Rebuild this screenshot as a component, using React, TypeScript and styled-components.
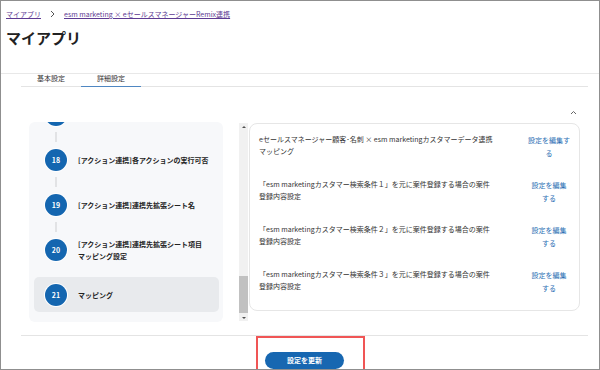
import React from 'react';
import styled, { createGlobalStyle } from 'styled-components';

const GlobalStyle = createGlobalStyle`
  body {
    margin: 0;
    font-family: "Noto Sans CJK JP", "Noto Sans", sans-serif;
    background: #fff;
  }
`;

const Frame = styled.div`
  width: 600px;
  height: 370px;
  box-sizing: border-box;
  border: 1px solid #8f8f8f;
  display: flex;
  flex-direction: column;
  overflow: hidden;
  background: #fff;
`;

const Header = styled.header`
  padding: 7px 5px 25px;
  border-bottom: 1px solid #e8e8e8;
`;

const Breadcrumb = styled.nav`
  display: flex;
  align-items: center;
  gap: 9px;
  font-size: 7px;
  line-height: 12px;
`;

const Crumb = styled.a`
  color: #5d3a92;
  text-decoration: underline;
  cursor: pointer;
`;

const Title = styled.h1`
  margin: 8px 0 0;
  font-size: 15px;
  line-height: 20px;
  font-weight: 700;
  color: #222;
`;

const Main = styled.main`
  margin: 0 11px 0 20px;
  display: flex;
  flex-direction: column;
`;

const TabBar = styled.div`
  display: flex;
  height: 12px;
  border-bottom: 1px solid #e4e4e4;
`;

const Tab = styled.div<{ $active?: boolean }>`
  width: 60px;
  text-align: center;
  font-size: 7px;
  line-height: 9px;
  color: #333;
  margin-bottom: -1px;
  border-bottom: 1px solid ${p => (p.$active ? '#4f87c2' : 'transparent')};
`;

const CollapseRow = styled.div`
  display: flex;
  justify-content: flex-end;
  padding: 23px 11px 0 0;
  height: 12px;
`;

const Body = styled.div`
  display: flex;
  gap: 1px;
  padding: 0 8px;
`;

const LeftColumn = styled.div`
  width: 219px;
  height: 200px;
  display: flex;
  justify-content: space-between;
  flex-shrink: 0;
`;

const StepPanel = styled.div`
  width: 194px;
  height: 200px;
  background: #f7f8fa;
  border-radius: 6px;
  overflow: hidden;
  box-sizing: border-box;
  padding: 0 4px 10px 5px;
  display: flex;
  flex-direction: column;
  justify-content: flex-end;
`;

const StepList = styled.ul`
  list-style: none;
  margin: 0;
  padding: 0;
  display: flex;
  flex-direction: column;
  gap: 10px;
`;

const Step = styled.li<{ $selected?: boolean }>`
  position: relative;
  height: 35px;
  flex-shrink: 0;
  display: flex;
  align-items: center;
  gap: 11px;
  padding-left: 11px;
  border-radius: 5px;
  background: ${p => (p.$selected ? '#e8eaed' : 'transparent')};

  & + &::before {
    content: '';
    position: absolute;
    left: 21px;
    top: -10px;
    width: 2px;
    height: 10px;
    background: #e2e3e5;
  }
`;

const StepNumber = styled.span`
  width: 22px;
  height: 22px;
  flex-shrink: 0;
  border-radius: 50%;
  background: #1466b0;
  box-shadow: 0 0 0 1px #fff;
  color: #fff;
  font-size: 7px;
  font-weight: 700;
  display: flex;
  align-items: center;
  justify-content: center;
`;

const StepLabel = styled.span`
  font-size: 7px;
  line-height: 12px;
  font-weight: 700;
  color: #222;
`;

const ScrollTrack = styled.div`
  width: 9px;
  margin-top: 1px;
  height: 198px;
  background: #f1f1f1;
  display: flex;
  flex-direction: column;
  align-items: center;
  justify-content: space-between;
  padding: 3px 0 2px;
  box-sizing: border-box;
`;

const ScrollThumbArea = styled.div`
  flex: 1;
  width: 100%;
  display: flex;
  flex-direction: column;
  justify-content: flex-end;
  padding: 4px 0 4px;
`;

const ScrollThumb = styled.div`
  height: 37px;
  width: 100%;
  background: #c1c1c1;
`;

const Arrow = styled.span<{ $down?: boolean }>`
  width: 0;
  height: 0;
  border-left: 2px solid transparent;
  border-right: 2px solid transparent;
  ${p => (p.$down ? 'border-top: 2px solid #505050;' : 'border-bottom: 2px solid #505050;')}
`;

const Card = styled.section`
  flex: 1;
  align-self: flex-start;
  margin-top: 1px;
  height: 188px;
  box-sizing: border-box;
  border: 1px solid #e6e6e6;
  border-radius: 8px;
  padding: 10px 7px 0 9px;
  display: flex;
  flex-direction: column;
  gap: 20px;
`;

const MappingRow = styled.div`
  display: flex;
  justify-content: space-between;
  align-items: flex-start;
`;

const MappingText = styled.p`
  margin: 0;
  width: 236px;
  font-size: 7px;
  line-height: 11.5px;
  color: #333;
  white-space: nowrap;
`;

const LinkCell = styled.div`
  width: 46px;
  display: flex;
  justify-content: center;
`;

const EditLink = styled.a<{ $width: number }>`
  width: ${p => p.$width}px;
  text-align: center;
  font-size: 7px;
  line-height: 12.5px;
  color: #2c6fb4;
  cursor: pointer;
`;

const Footer = styled.footer`
  margin-top: 13px;
  border-top: 1px solid #e4e4e4;
  display: flex;
  justify-content: center;
`;

const Highlight = styled.div`
  border: 2px solid #f05555;
  padding: 6px 19px 5px 7px;
  margin-left: 12px;
`;

const PrimaryButton = styled.button`
  width: 79px;
  height: 17px;
  border: none;
  border-radius: 9px;
  background: #1767b1;
  color: #fff;
  font-family: inherit;
  font-size: 7px;
  font-weight: 700;
  padding: 0;
  cursor: pointer;
`;

const steps = [
  { no: 18, label: ['[アクション連携]各アクションの実行可否'] },
  { no: 19, label: ['[アクション連携]連携先拡張シート名'] },
  { no: 20, label: ['[アクション連携]連携先拡張シート項目', 'マッピング設定'] },
  { no: 21, label: ['マッピング'], selected: true },
];

const mappings = [
  { lines: ['eセールスマネージャー顧客･名刺 × esm marketingカスタマーデータ連携', 'マッピング'], linkWidth: 43 },
  { lines: ['「esm marketingカスタマー検索条件１」を元に案件登録する場合の案件', '登録内容設定'], linkWidth: 37 },
  { lines: ['「esm marketingカスタマー検索条件２」を元に案件登録する場合の案件', '登録内容設定'], linkWidth: 37 },
  { lines: ['「esm marketingカスタマー検索条件３」を元に案件登録する場合の案件', '登録内容設定'], linkWidth: 37 },
];

const ChevronUp = () => (
  <svg width="7" height="5" viewBox="0 0 7 5" fill="none">
    <path d="M1 4 L3.5 1.5 L6 4" stroke="#666" strokeWidth="1" />
  </svg>
);

const withBreaks = (lines: string[]) =>
  lines.map((l, i) => (
    <React.Fragment key={i}>
      {i > 0 && <br />}
      {l}
    </React.Fragment>
  ));

const App: React.FC = () => {
  return (
    <>
      <GlobalStyle />
      <Frame>
        <Header>
          <Breadcrumb>
            <Crumb>マイアプリ</Crumb>
            <svg width="5" height="8" viewBox="0 0 5 8" fill="none">
              <path d="M1 1 L4 4 L1 7" stroke="#555" strokeWidth="1" />
            </svg>
            <Crumb>esm marketing × eセールスマネージャーRemix連携</Crumb>
          </Breadcrumb>
          <Title>マイアプリ</Title>
        </Header>

        <Main>
          <TabBar>
            <Tab>基本設定</Tab>
            <Tab $active>詳細設定</Tab>
          </TabBar>

          <CollapseRow>
            <ChevronUp />
          </CollapseRow>

          <Body>
            <LeftColumn>
              <StepPanel>
                <StepList>
                  {/* previous step, scrolled mostly out of view */}
                  <Step>
                    <StepNumber />
                  </Step>
                  {steps.map(s => (
                    <Step key={s.no} $selected={s.selected}>
                      <StepNumber>{s.no}</StepNumber>
                      <StepLabel>{withBreaks(s.label)}</StepLabel>
                    </Step>
                  ))}
                </StepList>
              </StepPanel>
              <ScrollTrack>
                <Arrow />
                <ScrollThumbArea>
                  <ScrollThumb />
                </ScrollThumbArea>
                <Arrow $down />
              </ScrollTrack>
            </LeftColumn>

            <Card>
              {mappings.map((m, i) => (
                <MappingRow key={i}>
                  <MappingText>{withBreaks(m.lines)}</MappingText>
                  <LinkCell>
                    <EditLink $width={m.linkWidth}>設定を編集する</EditLink>
                  </LinkCell>
                </MappingRow>
              ))}
            </Card>
          </Body>

          <Footer>
            <Highlight>
              <PrimaryButton>設定を更新</PrimaryButton>
            </Highlight>
          </Footer>
        </Main>
      </Frame>
    </>
  );
};

export default App;
